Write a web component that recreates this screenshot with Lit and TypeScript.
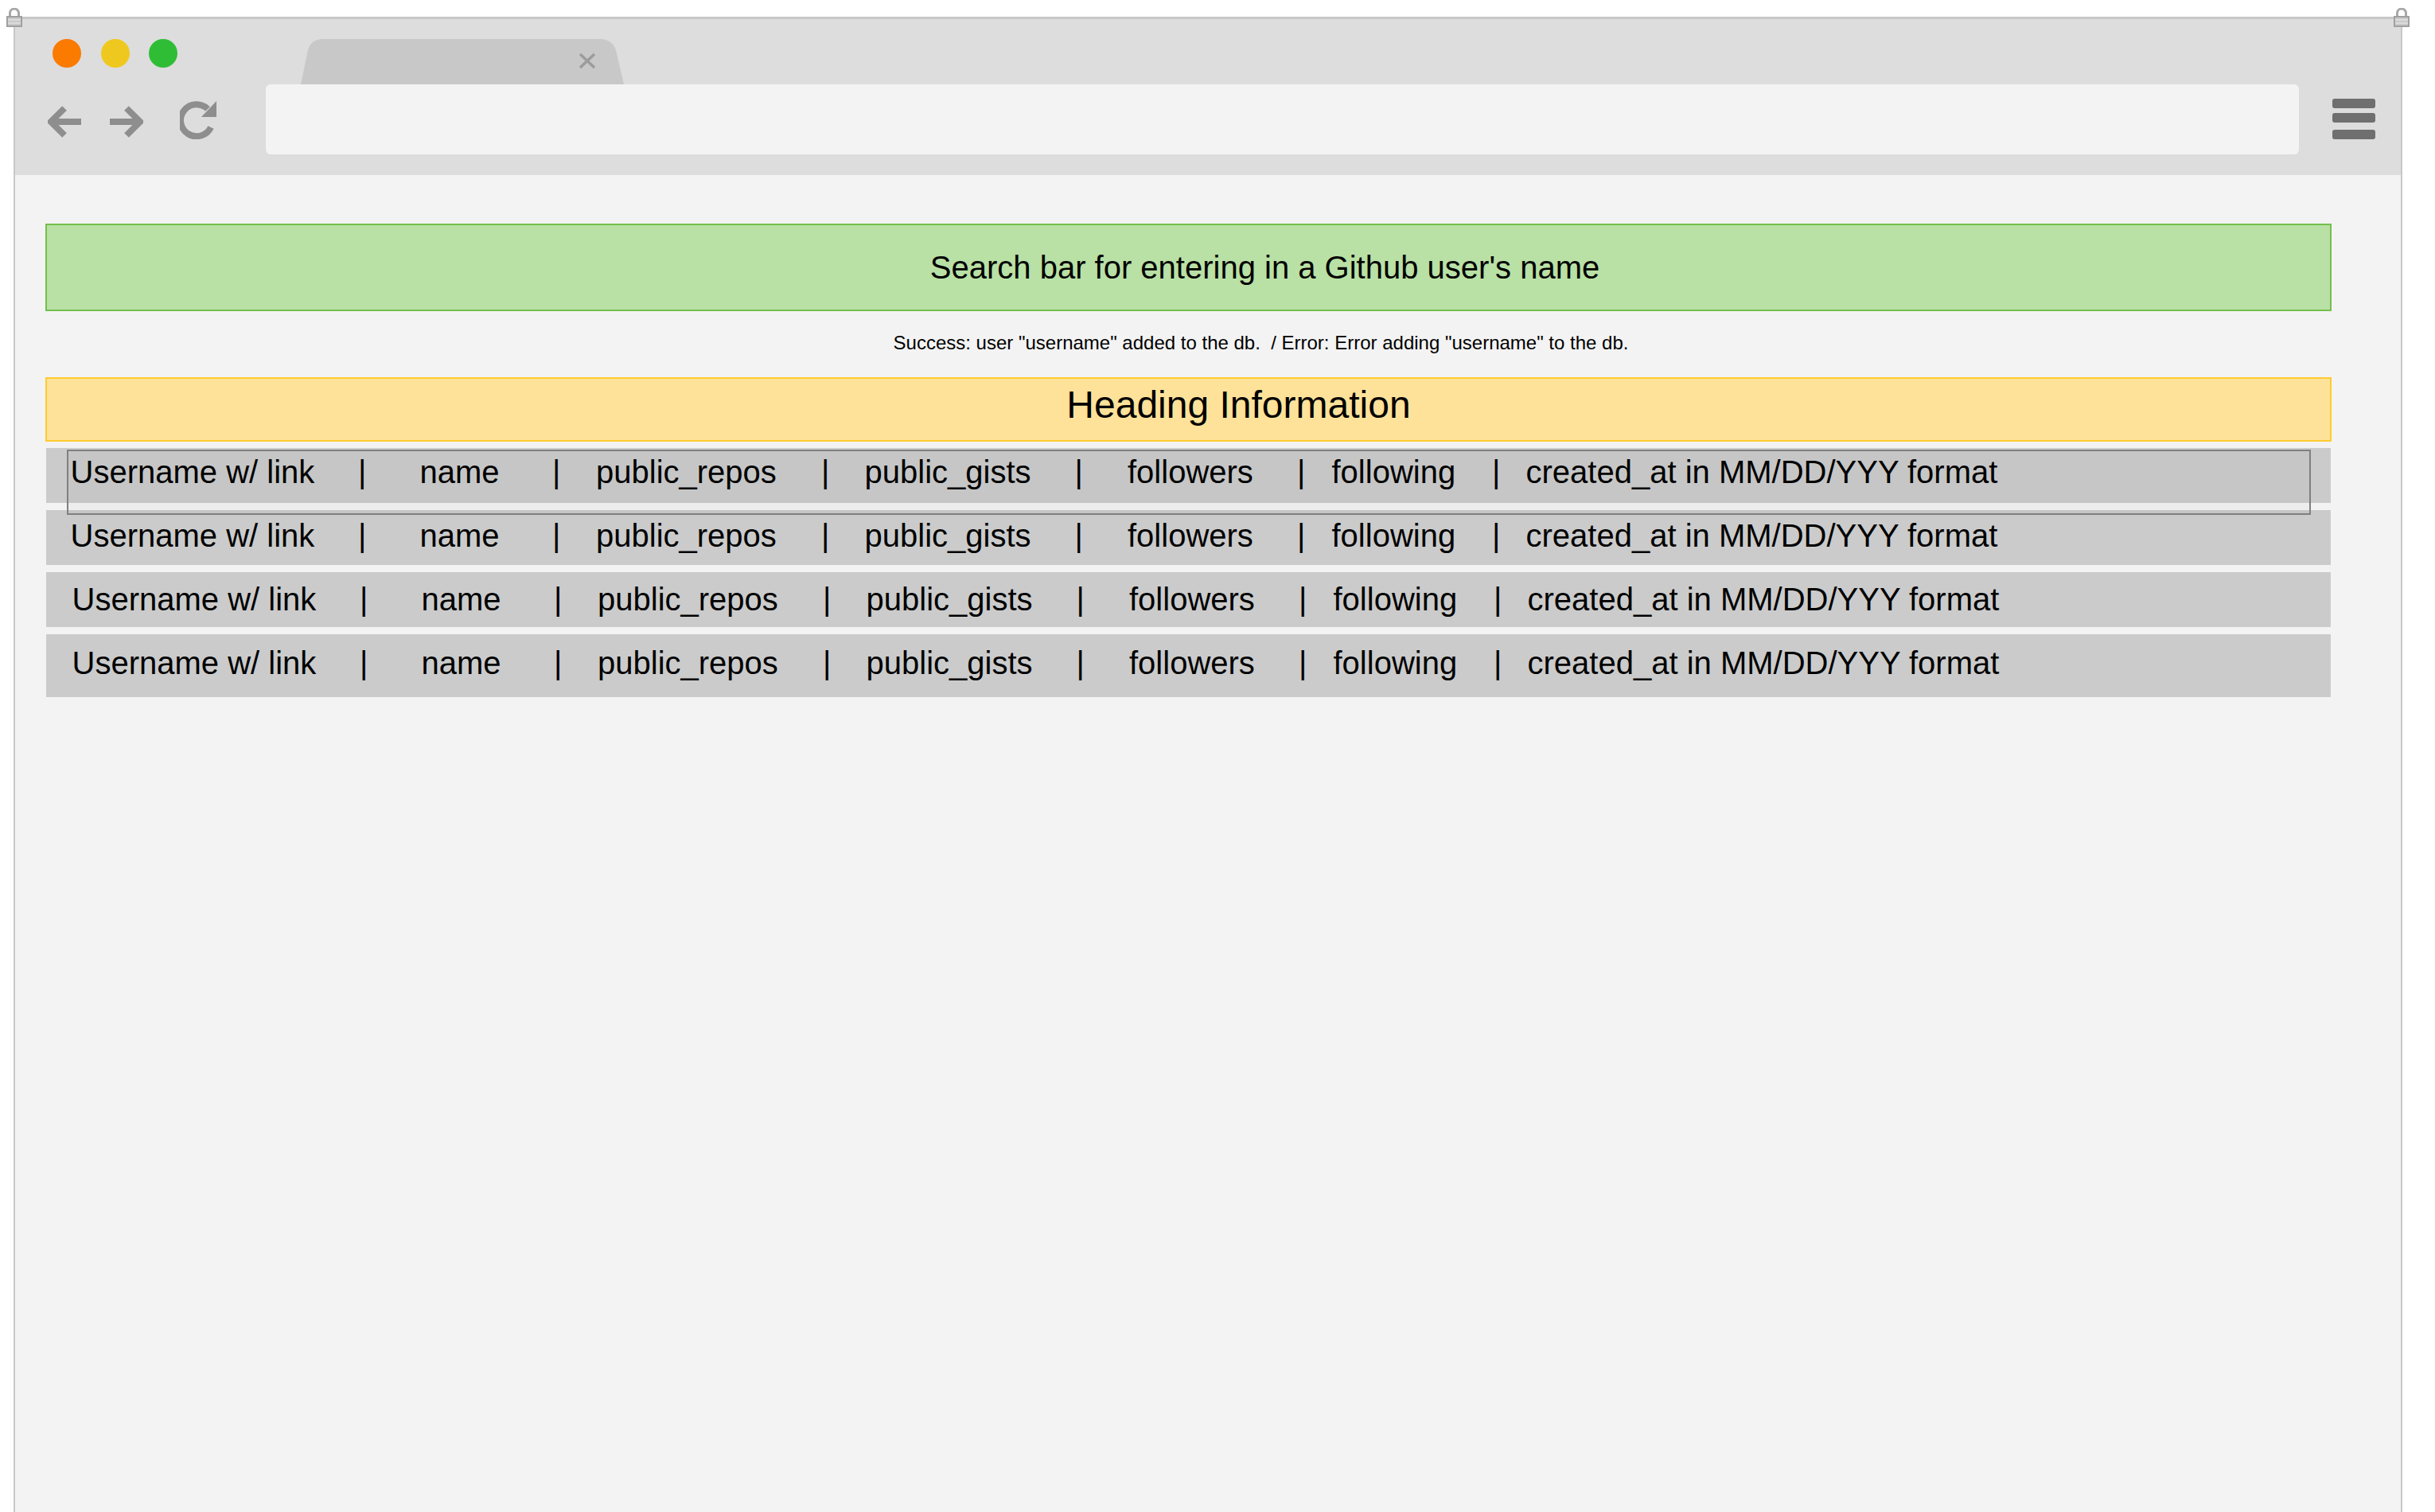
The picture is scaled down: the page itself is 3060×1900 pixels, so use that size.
import {css, html, LitElement} from 'lit';
import {customElement} from 'lit/decorators.js';

const ROW_CELLS = [
  'Username w/ link',
  '|',
  'name',
  '|',
  'public_repos',
  '|',
  'public_gists',
  '|',
  'followers',
  '|',
  'following',
  '|',
  'created_at in MM/DD/YYY format',
];

// text drifts down a little in each row of the mockup
const ROWS = [
  {textTop: 6, shifted: false},
  {textTop: 8, shifted: false},
  {textTop: 10, shifted: true},
  {textTop: 12, shifted: true},
];

const lock = html`
  <svg class="lock" viewBox="0 0 20 24" width="20" height="24">
    <path d="M4.5 11V6.5a5.5 5.5 0 0 1 11 0V11" fill="none" stroke="#a8a8a8" stroke-width="3" />
    <rect x="1" y="11" width="18" height="12" fill="#c9c9c9" stroke="#a0a0a0" stroke-width="2" />
    <path d="M2 15h16M2 19h16" stroke="#e2e2e2" stroke-width="1.5" />
  </svg>
`;

@customElement('app-root')
class AppRoot extends LitElement {
  override render() {
    return html`
      <div class="frame">
        <div class="lock-left">${lock}</div>
        <div class="lock-right">${lock}</div>
        <header class="chrome">
          <div class="tabstrip">
            <div class="lights">
              <i class="orange"></i>
              <i class="yellow"></i>
              <i class="green"></i>
            </div>
            <div class="tab">
              <svg viewBox="0 0 406 57" width="406" height="57">
                <path d="M0 57 L9 14 Q13 0 28 0 H376 Q391 0 396 14 L406 57 Z" fill="#c8c8c8" />
                <path d="M351 19 L369 36 M369 19 L351 36" stroke="#9c9c9c" stroke-width="3.5" />
              </svg>
            </div>
          </div>
          <div class="toolbar">
            <div class="nav">
              <svg viewBox="0 0 42 40" width="42" height="40">
                <path d="M42 20H5M21 3 4 20l17 17" fill="none" stroke="#8e8e8e" stroke-width="8" />
              </svg>
              <svg viewBox="0 0 42 40" width="42" height="40">
                <path d="M0 20H37M21 3l17 17-17 17" fill="none" stroke="#8e8e8e" stroke-width="8" />
              </svg>
              <svg class="reload" viewBox="0 0 46 48" width="46" height="48">
                <path d="M35 10A20 20 0 1 0 39 33" fill="none" stroke="#8e8e8e" stroke-width="8" />
                <path d="M46 0V20H27Z" fill="#8e8e8e" />
              </svg>
            </div>
            <div class="url"></div>
            <div class="menu"><i></i><i></i><i></i></div>
          </div>
        </header>
        <main class="content">
          <div class="search">Search bar for entering in a Github user's name</div>
          <div class="message">
            Success: user "username" added to the db.&nbsp; / Error: Error adding "username" to the db.
          </div>
          <div class="heading">Heading Information</div>
          <div class="rows">
            ${ROWS.map(
              (row) => html`
                <div class="row ${row.shifted ? 'shifted' : ''}" style="padding-top: ${row.textTop}px">
                  ${ROW_CELLS.map((cell) => html`<span>${cell}</span>`)}
                </div>
              `,
            )}
          </div>
          <div class="selection"></div>
        </main>
      </div>
    `;
  }

  static override styles = css`
    :host {
      display: block;
      height: 1900px;
      overflow: hidden;
      background: #fff;
      font-family: 'Liberation Sans', Arial, sans-serif;
      color: #000;
    }

    .frame {
      position: relative;
      box-sizing: border-box;
      width: 3002px;
      height: 1879px;
      margin: 21px 0 0 17px;
      border: 2px solid #c8c8c8;
      border-bottom: 0;
      border-top-width: 3px;
      background: #f3f3f3;
    }

    .lock-left,
    .lock-right {
      position: absolute;
      top: -14px;
      line-height: 0;
    }

    .lock-left {
      left: -11px;
    }

    .lock-right {
      right: -11px;
    }

    .chrome {
      height: 196px;
      background: #ddd;
    }

    .tabstrip {
      display: flex;
      height: 82px;
      align-items: flex-start;
      padding: 25px 0 0 47px;
      box-sizing: border-box;
    }

    .lights {
      display: flex;
      gap: 24.5px;
    }

    .lights i {
      width: 36px;
      height: 36px;
      border-radius: 50%;
    }

    .orange {
      background: #fb7a00;
    }

    .yellow {
      background: #efc81f;
    }

    .green {
      background: #30bd36;
    }

    .tab {
      margin-left: 155px;
      line-height: 0;
    }

    .toolbar {
      display: flex;
      height: 88px;
    }

    .nav {
      display: flex;
      width: 315px;
      box-sizing: border-box;
      padding: 27px 0 0 41px;
      gap: 36px;
      align-items: flex-start;
    }

    .nav svg {
      flex: none;
    }

    .reload {
      margin: -6px 0 0 10px;
    }

    .url {
      width: 2555px;
      height: 88px;
      background: #f3f3f3;
      border-radius: 6px;
    }

    .menu {
      display: flex;
      flex-direction: column;
      margin: 18px 0 0 42px;
    }

    .menu i {
      width: 54px;
      height: 12px;
      border-radius: 3px;
      background: #6f6f6f;
    }

    .menu i + i {
      margin-top: 6px;
    }

    .menu i:last-child {
      margin-top: 9px;
    }

    .content {
      position: relative;
      padding: 61px 0 0 38px;
    }

    .search,
    .heading,
    .message {
      box-sizing: border-box;
      width: 2873px;
      display: flex;
      align-items: center;
      justify-content: center;
    }

    .search {
      height: 110px;
      padding: 1px 0 0 192px;
      font-size: 40px;
      background: #b9e0a5;
      border: 2px solid #72bf4c;
    }

    .message {
      height: 83px;
      padding: 0 0 3px 182px;
      font-size: 24px;
    }

    .heading {
      height: 81px;
      padding: 0 0 13px 126px;
      font-size: 48px;
      background: #ffe299;
      border: 2px solid #ffcb2f;
    }

    .rows {
      display: flex;
      flex-direction: column;
      gap: 9px;
      width: 2871px;
      margin: 8px 0 0 1px;
    }

    .row {
      display: grid;
      grid-template-columns: 361.5px 77.5px 166.5px 55px 283px 54.5px 264px 66.5px 213px 43.5px 201.5px 42.5px 1fr;
      height: 69px;
      padding-left: 30.5px;
      box-sizing: border-box;
      background: #cbcbcb;
      font-size: 40px;
      line-height: 48px;
      white-space: pre;
    }

    .row:last-child {
      height: 79px;
    }

    .shifted {
      padding-left: 32.5px;
    }

    .selection {
      position: absolute;
      left: 65px;
      top: 345px;
      width: 2820px;
      height: 82px;
      box-sizing: border-box;
      border: 2px solid #808080;
      background: rgba(0, 0, 0, 0.025);
    }
  `;
}

declare global {
  interface HTMLElementTagNameMap {
    'app-root': AppRoot;
  }
}
